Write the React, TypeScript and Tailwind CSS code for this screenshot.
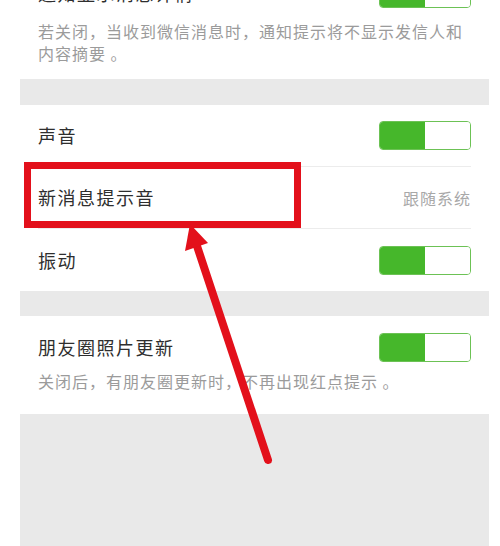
import React from 'react';

const Toggle = () => (
  <div className="flex h-[29px] w-[92px] shrink-0 overflow-hidden rounded-[4px] border-[1.5px] border-[#6cc255] bg-white">
    <div className="h-full w-1/2 bg-[#46b72b]" />
    <div className="h-full w-1/2 bg-white" />
  </div>
);

const Row = ({ title, right, last }: { title: string; right: React.ReactNode; last?: boolean }) => (
  <div className="bg-white">
    <div className={`mx-[18px] flex h-[62px] items-center justify-between ${last ? '' : 'border-b border-[#ececec]'}`}>
      <span className="text-[18px] tracking-[1.5px] text-[#2e2e2e]">{title}</span>
      {right}
    </div>
  </div>
);

const Band = ({ h }: { h: string }) => <div className={`bg-[#e9e9e9] ${h}`} />;

export default function App() {
  return (
    <div className="relative h-[546px] w-[500px] overflow-hidden bg-white font-['Noto_Sans_CJK_SC',sans-serif]">
      <div className="ml-[20px] mt-[-38px] flex w-[469px] flex-col">
        <div className="bg-white px-[18px] pb-[15px] pt-[17px]">
          <div className="flex h-[29px] items-center justify-between">
            <span className="text-[18px] tracking-[1.5px] text-[#2e2e2e]">通知显示消息详情</span>
            <Toggle />
          </div>
          <p className="mt-[12px] text-[16px] leading-[22px] tracking-[1px] text-[#9b9b9b]">
            若关闭，当收到微信消息时，通知提示将不显示发信人和
            <br />
            内容摘要 。
          </p>
        </div>

        <Band h="h-[26px]" />

        <Row title="声音" right={<Toggle />} />
        <Row
          title="新消息提示音"
          right={<span className="text-[16px] tracking-[1px] text-[#a8a8a8]">跟随系统</span>}
        />
        <Row title="振动" right={<Toggle />} last />

        <Band h="h-[25px]" />

        <div className="bg-white px-[18px] pb-[22px] pt-[17px]">
          <div className="flex h-[29px] items-center justify-between">
            <span className="text-[18px] tracking-[1.5px] text-[#2e2e2e]">朋友圈照片更新</span>
            <Toggle />
          </div>
          <p className="mt-[8px] text-[16px] leading-[22px] tracking-[1px] text-[#9b9b9b]">
            关闭后，有朋友圈更新时，不再出现红点提示 。
          </p>
        </div>

        <Band h="h-[140px]" />
      </div>

      {/* annotation: highlight box */}
      <div className="pointer-events-none absolute left-[24px] top-[162px] h-[66px] w-[277px] border-[7px] border-[#e3101b]" />

      {/* annotation: arrow */}
      <svg className="pointer-events-none absolute left-0 top-0" width="500" height="546" viewBox="0 0 500 546">
        <line x1="268" y1="460" x2="196" y2="243" stroke="#e3101b" strokeWidth="8" strokeLinecap="round" />
        <polygon points="190,224 208,243 185,251" fill="#e3101b" />
      </svg>
    </div>
  );
}
